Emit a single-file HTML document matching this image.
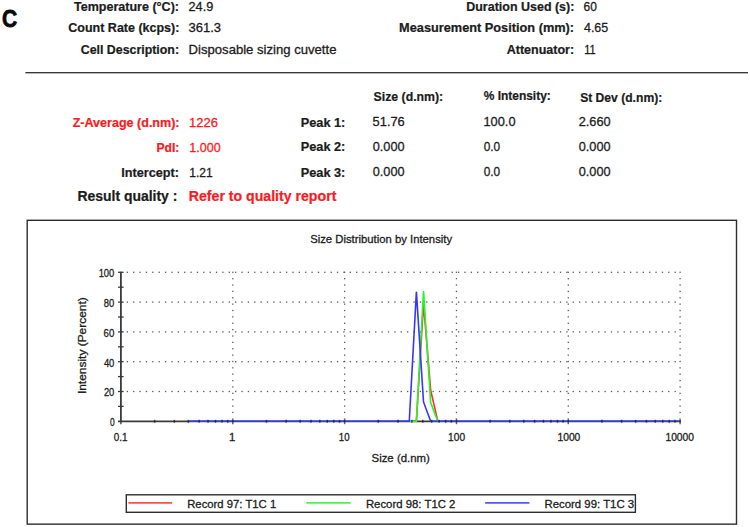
<!DOCTYPE html><html><head><meta charset="utf-8"><style>html,body{margin:0;padding:0;background:#fff}svg{display:block}text{font-family:"Liberation Sans",sans-serif;white-space:pre}</style></head><body>
<svg width="750" height="527" viewBox="0 0 750 527">
<rect width="750" height="527" fill="#fff"/>
<text x="2.11" y="26.70" font-size="24.2" font-weight="bold" textLength="15.15" lengthAdjust="spacingAndGlyphs" fill="#0a0a0a" stroke="#0a0a0a" stroke-width="0.8">C</text>
<text x="73.95" y="11.00" font-size="12.6" font-weight="bold" textLength="105.09" lengthAdjust="spacingAndGlyphs" fill="#1c1c1c" stroke="#1c1c1c" stroke-width="0.22">Temperature (°C):</text>
<text x="68.32" y="32.40" font-size="12.6" font-weight="bold" textLength="111.06" lengthAdjust="spacingAndGlyphs" fill="#1c1c1c" stroke="#1c1c1c" stroke-width="0.22">Count Rate (kcps):</text>
<text x="80.76" y="54.40" font-size="12.6" font-weight="bold" textLength="98.28" lengthAdjust="spacingAndGlyphs" fill="#1c1c1c" stroke="#1c1c1c" stroke-width="0.22">Cell Description:</text>
<text x="188.56" y="11.20" font-size="13" textLength="24.68" lengthAdjust="spacingAndGlyphs" fill="#1c1c1c" stroke="#1c1c1c" stroke-width="0.3">24.9</text>
<text x="188.45" y="32.40" font-size="13" textLength="32.57" lengthAdjust="spacingAndGlyphs" fill="#1c1c1c" stroke="#1c1c1c" stroke-width="0.3">361.3</text>
<text x="188.58" y="54.40" font-size="13" textLength="147.86" lengthAdjust="spacingAndGlyphs" fill="#1c1c1c" stroke="#1c1c1c" stroke-width="0.3">Disposable sizing cuvette</text>
<text x="466.24" y="11.00" font-size="12.6" font-weight="bold" textLength="108.14" lengthAdjust="spacingAndGlyphs" fill="#1c1c1c" stroke="#1c1c1c" stroke-width="0.22">Duration Used (s):</text>
<text x="399.08" y="32.00" font-size="12.6" font-weight="bold" textLength="174.98" lengthAdjust="spacingAndGlyphs" fill="#1c1c1c" stroke="#1c1c1c" stroke-width="0.22">Measurement Position (mm):</text>
<text x="506.73" y="54.40" font-size="12.6" font-weight="bold" textLength="67.38" lengthAdjust="spacingAndGlyphs" fill="#1c1c1c" stroke="#1c1c1c" stroke-width="0.22">Attenuator:</text>
<text x="583.59" y="11.00" font-size="13" textLength="13.33" lengthAdjust="spacingAndGlyphs" fill="#1c1c1c" stroke="#1c1c1c" stroke-width="0.3">60</text>
<text x="584.00" y="32.00" font-size="13" textLength="24.22" lengthAdjust="spacingAndGlyphs" fill="#1c1c1c" stroke="#1c1c1c" stroke-width="0.3">4.65</text>
<text x="584.26" y="54.40" font-size="13" textLength="11.42" lengthAdjust="spacingAndGlyphs" fill="#1c1c1c" stroke="#1c1c1c" stroke-width="0.3">11</text>
<text x="373.53" y="101.40" font-size="12.6" font-weight="bold" textLength="69.69" lengthAdjust="spacingAndGlyphs" fill="#1c1c1c" stroke="#1c1c1c" stroke-width="0.22">Size (d.nm):</text>
<text x="483.69" y="100.40" font-size="12.2" font-weight="bold" textLength="67.11" lengthAdjust="spacingAndGlyphs" fill="#1c1c1c" stroke="#1c1c1c" stroke-width="0.22">% Intensity:</text>
<text x="580.15" y="102.40" font-size="12.6" font-weight="bold" textLength="82.07" lengthAdjust="spacingAndGlyphs" fill="#1c1c1c" stroke="#1c1c1c" stroke-width="0.22">St Dev (d.nm):</text>
<text x="72.69" y="126.80" font-size="12.6" font-weight="bold" textLength="106.86" lengthAdjust="spacingAndGlyphs" fill="#fa1a22" stroke="#fa1a22" stroke-width="0.22">Z-Average (d.nm):</text>
<text x="156.44" y="152.20" font-size="12.6" font-weight="bold" textLength="22.89" lengthAdjust="spacingAndGlyphs" fill="#fa1a22" stroke="#fa1a22" stroke-width="0.22">PdI:</text>
<text x="121.33" y="177.00" font-size="12.6" font-weight="bold" textLength="57.72" lengthAdjust="spacingAndGlyphs" fill="#1c1c1c" stroke="#1c1c1c" stroke-width="0.22">Intercept:</text>
<text x="189.10" y="126.80" font-size="13" textLength="28.78" lengthAdjust="spacingAndGlyphs" fill="#fa1a22" stroke="#fa1a22" stroke-width="0.3">1226</text>
<text x="189.34" y="151.50" font-size="13" textLength="31.27" lengthAdjust="spacingAndGlyphs" fill="#fa1a22" stroke="#fa1a22" stroke-width="0.3">1.000</text>
<text x="189.31" y="176.50" font-size="13" textLength="23.40" lengthAdjust="spacingAndGlyphs" fill="#1c1c1c" stroke="#1c1c1c" stroke-width="0.3">1.21</text>
<text x="300.76" y="127.00" font-size="12.6" font-weight="bold" textLength="44.60" lengthAdjust="spacingAndGlyphs" fill="#1c1c1c" stroke="#1c1c1c" stroke-width="0.22">Peak 1:</text>
<text x="300.76" y="151.10" font-size="12.6" font-weight="bold" textLength="44.60" lengthAdjust="spacingAndGlyphs" fill="#1c1c1c" stroke="#1c1c1c" stroke-width="0.22">Peak 2:</text>
<text x="300.76" y="177.00" font-size="12.6" font-weight="bold" textLength="44.60" lengthAdjust="spacingAndGlyphs" fill="#1c1c1c" stroke="#1c1c1c" stroke-width="0.22">Peak 3:</text>
<text x="372.62" y="126.00" font-size="13" textLength="32.14" lengthAdjust="spacingAndGlyphs" fill="#1c1c1c" stroke="#1c1c1c" stroke-width="0.3">51.76</text>
<text x="372.77" y="151.00" font-size="13" textLength="31.80" lengthAdjust="spacingAndGlyphs" fill="#1c1c1c" stroke="#1c1c1c" stroke-width="0.3">0.000</text>
<text x="372.77" y="176.00" font-size="13" textLength="31.80" lengthAdjust="spacingAndGlyphs" fill="#1c1c1c" stroke="#1c1c1c" stroke-width="0.3">0.000</text>
<text x="483.51" y="126.00" font-size="13" textLength="32.01" lengthAdjust="spacingAndGlyphs" fill="#1c1c1c" stroke="#1c1c1c" stroke-width="0.3">100.0</text>
<text x="483.65" y="151.00" font-size="13" textLength="16.47" lengthAdjust="spacingAndGlyphs" fill="#1c1c1c" stroke="#1c1c1c" stroke-width="0.3">0.0</text>
<text x="483.65" y="176.00" font-size="13" textLength="16.47" lengthAdjust="spacingAndGlyphs" fill="#1c1c1c" stroke="#1c1c1c" stroke-width="0.3">0.0</text>
<text x="578.69" y="126.00" font-size="13" textLength="31.95" lengthAdjust="spacingAndGlyphs" fill="#1c1c1c" stroke="#1c1c1c" stroke-width="0.3">2.660</text>
<text x="578.77" y="151.00" font-size="13" textLength="31.80" lengthAdjust="spacingAndGlyphs" fill="#1c1c1c" stroke="#1c1c1c" stroke-width="0.3">0.000</text>
<text x="578.77" y="176.00" font-size="13" textLength="31.80" lengthAdjust="spacingAndGlyphs" fill="#1c1c1c" stroke="#1c1c1c" stroke-width="0.3">0.000</text>
<text x="77.45" y="200.80" font-size="13.8" font-weight="bold" textLength="99.93" lengthAdjust="spacingAndGlyphs" fill="#1c1c1c" stroke="#1c1c1c" stroke-width="0.22">Result quality :</text>
<text x="188.77" y="201.00" font-size="14.1" font-weight="bold" textLength="147.58" lengthAdjust="spacingAndGlyphs" fill="#fa1a22" stroke="#fa1a22" stroke-width="0.22">Refer to quality report</text>
<text x="310.13" y="243.20" font-size="11.4" textLength="141.98" lengthAdjust="spacingAndGlyphs" fill="#1c1c1c" stroke="#1c1c1c" stroke-width="0.3">Size Distribution by Intensity</text>
<text x="98.63" y="277.20" font-size="11.3" textLength="15.73" lengthAdjust="spacingAndGlyphs" fill="#1c1c1c" stroke="#1c1c1c" stroke-width="0.3">100</text>
<text x="103.76" y="307.00" font-size="11.3" textLength="10.46" lengthAdjust="spacingAndGlyphs" fill="#1c1c1c" stroke="#1c1c1c" stroke-width="0.3">80</text>
<text x="103.58" y="336.80" font-size="11.3" textLength="10.73" lengthAdjust="spacingAndGlyphs" fill="#1c1c1c" stroke="#1c1c1c" stroke-width="0.3">60</text>
<text x="103.89" y="366.60" font-size="11.3" textLength="10.50" lengthAdjust="spacingAndGlyphs" fill="#1c1c1c" stroke="#1c1c1c" stroke-width="0.3">40</text>
<text x="103.95" y="396.40" font-size="11.3" textLength="10.36" lengthAdjust="spacingAndGlyphs" fill="#1c1c1c" stroke="#1c1c1c" stroke-width="0.3">20</text>
<text x="109.96" y="426.20" font-size="11.3" textLength="4.70" lengthAdjust="spacingAndGlyphs" fill="#1c1c1c" stroke="#1c1c1c" stroke-width="0.3">0</text>
<text x="113.67" y="440.60" font-size="11.3" textLength="13.74" lengthAdjust="spacingAndGlyphs" fill="#1c1c1c" stroke="#1c1c1c" stroke-width="0.3">0.1</text>
<text x="228.91" y="440.60" font-size="11.3" fill="#1c1c1c" stroke="#1c1c1c" stroke-width="0.3">1</text>
<text x="338.86" y="440.60" font-size="11.3" textLength="10.76" lengthAdjust="spacingAndGlyphs" fill="#1c1c1c" stroke="#1c1c1c" stroke-width="0.3">10</text>
<text x="448.10" y="440.60" font-size="11.3" textLength="16.94" lengthAdjust="spacingAndGlyphs" fill="#1c1c1c" stroke="#1c1c1c" stroke-width="0.3">100</text>
<text x="557.44" y="440.60" font-size="11.3" textLength="22.91" lengthAdjust="spacingAndGlyphs" fill="#1c1c1c" stroke="#1c1c1c" stroke-width="0.3">1000</text>
<text x="665.44" y="440.60" font-size="11.3" textLength="28.58" lengthAdjust="spacingAndGlyphs" fill="#1c1c1c" stroke="#1c1c1c" stroke-width="0.3">10000</text>
<text x="371.53" y="461.60" font-size="11.4" textLength="58.34" lengthAdjust="spacingAndGlyphs" fill="#1c1c1c" stroke="#1c1c1c" stroke-width="0.3">Size (d.nm)</text>
<text x="187.19" y="507.70" font-size="11.4" textLength="89.01" lengthAdjust="spacingAndGlyphs" fill="#1c1c1c" stroke="#1c1c1c" stroke-width="0.3" clip-path="url(#lc)">Record 97: T1C 1</text>
<text x="365.92" y="507.70" font-size="11.4" textLength="89.52" lengthAdjust="spacingAndGlyphs" fill="#1c1c1c" stroke="#1c1c1c" stroke-width="0.3" clip-path="url(#lc)">Record 98: T1C 2</text>
<text x="544.51" y="507.70" font-size="11.4" textLength="89.65" lengthAdjust="spacingAndGlyphs" fill="#1c1c1c" stroke="#1c1c1c" stroke-width="0.3" clip-path="url(#lc)">Record 99: T1C 3</text>
<text transform="translate(86.1,393.3) rotate(-90)" x="-0.80" y="0" font-size="11.5" textLength="96.84" lengthAdjust="spacingAndGlyphs" fill="#1c1c1c" stroke="#1c1c1c" stroke-width="0.3">Intensity (Percent)</text>
<rect x="25.4" y="72.05" width="722.6" height="1.3" fill="#2e2e2e"/>
<rect x="27.2" y="220.3" width="709.3" height="303.85" fill="none" stroke="#2e2e2e" stroke-width="1.4"/>
<g fill="#5a5a5a"><rect x="126.72" y="390.85" width="1.3" height="1.3"/><rect x="133.09" y="390.85" width="1.3" height="1.3"/><rect x="139.46" y="390.85" width="1.3" height="1.3"/><rect x="145.83" y="390.85" width="1.3" height="1.3"/><rect x="152.20" y="390.85" width="1.3" height="1.3"/><rect x="158.57" y="390.85" width="1.3" height="1.3"/><rect x="164.94" y="390.85" width="1.3" height="1.3"/><rect x="171.31" y="390.85" width="1.3" height="1.3"/><rect x="177.68" y="390.85" width="1.3" height="1.3"/><rect x="184.05" y="390.85" width="1.3" height="1.3"/><rect x="190.42" y="390.85" width="1.3" height="1.3"/><rect x="196.79" y="390.85" width="1.3" height="1.3"/><rect x="203.16" y="390.85" width="1.3" height="1.3"/><rect x="209.53" y="390.85" width="1.3" height="1.3"/><rect x="215.90" y="390.85" width="1.3" height="1.3"/><rect x="222.27" y="390.85" width="1.3" height="1.3"/><rect x="228.64" y="390.85" width="1.3" height="1.3"/><rect x="235.01" y="390.85" width="1.3" height="1.3"/><rect x="241.38" y="390.85" width="1.3" height="1.3"/><rect x="247.75" y="390.85" width="1.3" height="1.3"/><rect x="254.12" y="390.85" width="1.3" height="1.3"/><rect x="260.49" y="390.85" width="1.3" height="1.3"/><rect x="266.86" y="390.85" width="1.3" height="1.3"/><rect x="273.23" y="390.85" width="1.3" height="1.3"/><rect x="279.60" y="390.85" width="1.3" height="1.3"/><rect x="285.97" y="390.85" width="1.3" height="1.3"/><rect x="292.34" y="390.85" width="1.3" height="1.3"/><rect x="298.71" y="390.85" width="1.3" height="1.3"/><rect x="305.08" y="390.85" width="1.3" height="1.3"/><rect x="311.45" y="390.85" width="1.3" height="1.3"/><rect x="317.82" y="390.85" width="1.3" height="1.3"/><rect x="324.19" y="390.85" width="1.3" height="1.3"/><rect x="330.56" y="390.85" width="1.3" height="1.3"/><rect x="336.93" y="390.85" width="1.3" height="1.3"/><rect x="343.30" y="390.85" width="1.3" height="1.3"/><rect x="349.67" y="390.85" width="1.3" height="1.3"/><rect x="356.04" y="390.85" width="1.3" height="1.3"/><rect x="362.41" y="390.85" width="1.3" height="1.3"/><rect x="368.78" y="390.85" width="1.3" height="1.3"/><rect x="375.15" y="390.85" width="1.3" height="1.3"/><rect x="381.52" y="390.85" width="1.3" height="1.3"/><rect x="387.89" y="390.85" width="1.3" height="1.3"/><rect x="394.26" y="390.85" width="1.3" height="1.3"/><rect x="400.63" y="390.85" width="1.3" height="1.3"/><rect x="407.00" y="390.85" width="1.3" height="1.3"/><rect x="413.37" y="390.85" width="1.3" height="1.3"/><rect x="419.74" y="390.85" width="1.3" height="1.3"/><rect x="426.11" y="390.85" width="1.3" height="1.3"/><rect x="432.48" y="390.85" width="1.3" height="1.3"/><rect x="438.85" y="390.85" width="1.3" height="1.3"/><rect x="445.22" y="390.85" width="1.3" height="1.3"/><rect x="451.59" y="390.85" width="1.3" height="1.3"/><rect x="457.96" y="390.85" width="1.3" height="1.3"/><rect x="464.33" y="390.85" width="1.3" height="1.3"/><rect x="470.70" y="390.85" width="1.3" height="1.3"/><rect x="477.07" y="390.85" width="1.3" height="1.3"/><rect x="483.44" y="390.85" width="1.3" height="1.3"/><rect x="489.81" y="390.85" width="1.3" height="1.3"/><rect x="496.18" y="390.85" width="1.3" height="1.3"/><rect x="502.55" y="390.85" width="1.3" height="1.3"/><rect x="508.92" y="390.85" width="1.3" height="1.3"/><rect x="515.29" y="390.85" width="1.3" height="1.3"/><rect x="521.66" y="390.85" width="1.3" height="1.3"/><rect x="528.03" y="390.85" width="1.3" height="1.3"/><rect x="534.40" y="390.85" width="1.3" height="1.3"/><rect x="540.77" y="390.85" width="1.3" height="1.3"/><rect x="547.14" y="390.85" width="1.3" height="1.3"/><rect x="553.51" y="390.85" width="1.3" height="1.3"/><rect x="559.88" y="390.85" width="1.3" height="1.3"/><rect x="566.25" y="390.85" width="1.3" height="1.3"/><rect x="572.62" y="390.85" width="1.3" height="1.3"/><rect x="578.99" y="390.85" width="1.3" height="1.3"/><rect x="585.36" y="390.85" width="1.3" height="1.3"/><rect x="591.73" y="390.85" width="1.3" height="1.3"/><rect x="598.10" y="390.85" width="1.3" height="1.3"/><rect x="604.47" y="390.85" width="1.3" height="1.3"/><rect x="610.84" y="390.85" width="1.3" height="1.3"/><rect x="617.21" y="390.85" width="1.3" height="1.3"/><rect x="623.58" y="390.85" width="1.3" height="1.3"/><rect x="629.95" y="390.85" width="1.3" height="1.3"/><rect x="636.32" y="390.85" width="1.3" height="1.3"/><rect x="642.69" y="390.85" width="1.3" height="1.3"/><rect x="649.06" y="390.85" width="1.3" height="1.3"/><rect x="655.43" y="390.85" width="1.3" height="1.3"/><rect x="661.80" y="390.85" width="1.3" height="1.3"/><rect x="668.17" y="390.85" width="1.3" height="1.3"/><rect x="674.54" y="390.85" width="1.3" height="1.3"/><rect x="126.72" y="361.05" width="1.3" height="1.3"/><rect x="133.09" y="361.05" width="1.3" height="1.3"/><rect x="139.46" y="361.05" width="1.3" height="1.3"/><rect x="145.83" y="361.05" width="1.3" height="1.3"/><rect x="152.20" y="361.05" width="1.3" height="1.3"/><rect x="158.57" y="361.05" width="1.3" height="1.3"/><rect x="164.94" y="361.05" width="1.3" height="1.3"/><rect x="171.31" y="361.05" width="1.3" height="1.3"/><rect x="177.68" y="361.05" width="1.3" height="1.3"/><rect x="184.05" y="361.05" width="1.3" height="1.3"/><rect x="190.42" y="361.05" width="1.3" height="1.3"/><rect x="196.79" y="361.05" width="1.3" height="1.3"/><rect x="203.16" y="361.05" width="1.3" height="1.3"/><rect x="209.53" y="361.05" width="1.3" height="1.3"/><rect x="215.90" y="361.05" width="1.3" height="1.3"/><rect x="222.27" y="361.05" width="1.3" height="1.3"/><rect x="228.64" y="361.05" width="1.3" height="1.3"/><rect x="235.01" y="361.05" width="1.3" height="1.3"/><rect x="241.38" y="361.05" width="1.3" height="1.3"/><rect x="247.75" y="361.05" width="1.3" height="1.3"/><rect x="254.12" y="361.05" width="1.3" height="1.3"/><rect x="260.49" y="361.05" width="1.3" height="1.3"/><rect x="266.86" y="361.05" width="1.3" height="1.3"/><rect x="273.23" y="361.05" width="1.3" height="1.3"/><rect x="279.60" y="361.05" width="1.3" height="1.3"/><rect x="285.97" y="361.05" width="1.3" height="1.3"/><rect x="292.34" y="361.05" width="1.3" height="1.3"/><rect x="298.71" y="361.05" width="1.3" height="1.3"/><rect x="305.08" y="361.05" width="1.3" height="1.3"/><rect x="311.45" y="361.05" width="1.3" height="1.3"/><rect x="317.82" y="361.05" width="1.3" height="1.3"/><rect x="324.19" y="361.05" width="1.3" height="1.3"/><rect x="330.56" y="361.05" width="1.3" height="1.3"/><rect x="336.93" y="361.05" width="1.3" height="1.3"/><rect x="343.30" y="361.05" width="1.3" height="1.3"/><rect x="349.67" y="361.05" width="1.3" height="1.3"/><rect x="356.04" y="361.05" width="1.3" height="1.3"/><rect x="362.41" y="361.05" width="1.3" height="1.3"/><rect x="368.78" y="361.05" width="1.3" height="1.3"/><rect x="375.15" y="361.05" width="1.3" height="1.3"/><rect x="381.52" y="361.05" width="1.3" height="1.3"/><rect x="387.89" y="361.05" width="1.3" height="1.3"/><rect x="394.26" y="361.05" width="1.3" height="1.3"/><rect x="400.63" y="361.05" width="1.3" height="1.3"/><rect x="407.00" y="361.05" width="1.3" height="1.3"/><rect x="413.37" y="361.05" width="1.3" height="1.3"/><rect x="419.74" y="361.05" width="1.3" height="1.3"/><rect x="426.11" y="361.05" width="1.3" height="1.3"/><rect x="432.48" y="361.05" width="1.3" height="1.3"/><rect x="438.85" y="361.05" width="1.3" height="1.3"/><rect x="445.22" y="361.05" width="1.3" height="1.3"/><rect x="451.59" y="361.05" width="1.3" height="1.3"/><rect x="457.96" y="361.05" width="1.3" height="1.3"/><rect x="464.33" y="361.05" width="1.3" height="1.3"/><rect x="470.70" y="361.05" width="1.3" height="1.3"/><rect x="477.07" y="361.05" width="1.3" height="1.3"/><rect x="483.44" y="361.05" width="1.3" height="1.3"/><rect x="489.81" y="361.05" width="1.3" height="1.3"/><rect x="496.18" y="361.05" width="1.3" height="1.3"/><rect x="502.55" y="361.05" width="1.3" height="1.3"/><rect x="508.92" y="361.05" width="1.3" height="1.3"/><rect x="515.29" y="361.05" width="1.3" height="1.3"/><rect x="521.66" y="361.05" width="1.3" height="1.3"/><rect x="528.03" y="361.05" width="1.3" height="1.3"/><rect x="534.40" y="361.05" width="1.3" height="1.3"/><rect x="540.77" y="361.05" width="1.3" height="1.3"/><rect x="547.14" y="361.05" width="1.3" height="1.3"/><rect x="553.51" y="361.05" width="1.3" height="1.3"/><rect x="559.88" y="361.05" width="1.3" height="1.3"/><rect x="566.25" y="361.05" width="1.3" height="1.3"/><rect x="572.62" y="361.05" width="1.3" height="1.3"/><rect x="578.99" y="361.05" width="1.3" height="1.3"/><rect x="585.36" y="361.05" width="1.3" height="1.3"/><rect x="591.73" y="361.05" width="1.3" height="1.3"/><rect x="598.10" y="361.05" width="1.3" height="1.3"/><rect x="604.47" y="361.05" width="1.3" height="1.3"/><rect x="610.84" y="361.05" width="1.3" height="1.3"/><rect x="617.21" y="361.05" width="1.3" height="1.3"/><rect x="623.58" y="361.05" width="1.3" height="1.3"/><rect x="629.95" y="361.05" width="1.3" height="1.3"/><rect x="636.32" y="361.05" width="1.3" height="1.3"/><rect x="642.69" y="361.05" width="1.3" height="1.3"/><rect x="649.06" y="361.05" width="1.3" height="1.3"/><rect x="655.43" y="361.05" width="1.3" height="1.3"/><rect x="661.80" y="361.05" width="1.3" height="1.3"/><rect x="668.17" y="361.05" width="1.3" height="1.3"/><rect x="674.54" y="361.05" width="1.3" height="1.3"/><rect x="126.72" y="331.25" width="1.3" height="1.3"/><rect x="133.09" y="331.25" width="1.3" height="1.3"/><rect x="139.46" y="331.25" width="1.3" height="1.3"/><rect x="145.83" y="331.25" width="1.3" height="1.3"/><rect x="152.20" y="331.25" width="1.3" height="1.3"/><rect x="158.57" y="331.25" width="1.3" height="1.3"/><rect x="164.94" y="331.25" width="1.3" height="1.3"/><rect x="171.31" y="331.25" width="1.3" height="1.3"/><rect x="177.68" y="331.25" width="1.3" height="1.3"/><rect x="184.05" y="331.25" width="1.3" height="1.3"/><rect x="190.42" y="331.25" width="1.3" height="1.3"/><rect x="196.79" y="331.25" width="1.3" height="1.3"/><rect x="203.16" y="331.25" width="1.3" height="1.3"/><rect x="209.53" y="331.25" width="1.3" height="1.3"/><rect x="215.90" y="331.25" width="1.3" height="1.3"/><rect x="222.27" y="331.25" width="1.3" height="1.3"/><rect x="228.64" y="331.25" width="1.3" height="1.3"/><rect x="235.01" y="331.25" width="1.3" height="1.3"/><rect x="241.38" y="331.25" width="1.3" height="1.3"/><rect x="247.75" y="331.25" width="1.3" height="1.3"/><rect x="254.12" y="331.25" width="1.3" height="1.3"/><rect x="260.49" y="331.25" width="1.3" height="1.3"/><rect x="266.86" y="331.25" width="1.3" height="1.3"/><rect x="273.23" y="331.25" width="1.3" height="1.3"/><rect x="279.60" y="331.25" width="1.3" height="1.3"/><rect x="285.97" y="331.25" width="1.3" height="1.3"/><rect x="292.34" y="331.25" width="1.3" height="1.3"/><rect x="298.71" y="331.25" width="1.3" height="1.3"/><rect x="305.08" y="331.25" width="1.3" height="1.3"/><rect x="311.45" y="331.25" width="1.3" height="1.3"/><rect x="317.82" y="331.25" width="1.3" height="1.3"/><rect x="324.19" y="331.25" width="1.3" height="1.3"/><rect x="330.56" y="331.25" width="1.3" height="1.3"/><rect x="336.93" y="331.25" width="1.3" height="1.3"/><rect x="343.30" y="331.25" width="1.3" height="1.3"/><rect x="349.67" y="331.25" width="1.3" height="1.3"/><rect x="356.04" y="331.25" width="1.3" height="1.3"/><rect x="362.41" y="331.25" width="1.3" height="1.3"/><rect x="368.78" y="331.25" width="1.3" height="1.3"/><rect x="375.15" y="331.25" width="1.3" height="1.3"/><rect x="381.52" y="331.25" width="1.3" height="1.3"/><rect x="387.89" y="331.25" width="1.3" height="1.3"/><rect x="394.26" y="331.25" width="1.3" height="1.3"/><rect x="400.63" y="331.25" width="1.3" height="1.3"/><rect x="407.00" y="331.25" width="1.3" height="1.3"/><rect x="413.37" y="331.25" width="1.3" height="1.3"/><rect x="419.74" y="331.25" width="1.3" height="1.3"/><rect x="426.11" y="331.25" width="1.3" height="1.3"/><rect x="432.48" y="331.25" width="1.3" height="1.3"/><rect x="438.85" y="331.25" width="1.3" height="1.3"/><rect x="445.22" y="331.25" width="1.3" height="1.3"/><rect x="451.59" y="331.25" width="1.3" height="1.3"/><rect x="457.96" y="331.25" width="1.3" height="1.3"/><rect x="464.33" y="331.25" width="1.3" height="1.3"/><rect x="470.70" y="331.25" width="1.3" height="1.3"/><rect x="477.07" y="331.25" width="1.3" height="1.3"/><rect x="483.44" y="331.25" width="1.3" height="1.3"/><rect x="489.81" y="331.25" width="1.3" height="1.3"/><rect x="496.18" y="331.25" width="1.3" height="1.3"/><rect x="502.55" y="331.25" width="1.3" height="1.3"/><rect x="508.92" y="331.25" width="1.3" height="1.3"/><rect x="515.29" y="331.25" width="1.3" height="1.3"/><rect x="521.66" y="331.25" width="1.3" height="1.3"/><rect x="528.03" y="331.25" width="1.3" height="1.3"/><rect x="534.40" y="331.25" width="1.3" height="1.3"/><rect x="540.77" y="331.25" width="1.3" height="1.3"/><rect x="547.14" y="331.25" width="1.3" height="1.3"/><rect x="553.51" y="331.25" width="1.3" height="1.3"/><rect x="559.88" y="331.25" width="1.3" height="1.3"/><rect x="566.25" y="331.25" width="1.3" height="1.3"/><rect x="572.62" y="331.25" width="1.3" height="1.3"/><rect x="578.99" y="331.25" width="1.3" height="1.3"/><rect x="585.36" y="331.25" width="1.3" height="1.3"/><rect x="591.73" y="331.25" width="1.3" height="1.3"/><rect x="598.10" y="331.25" width="1.3" height="1.3"/><rect x="604.47" y="331.25" width="1.3" height="1.3"/><rect x="610.84" y="331.25" width="1.3" height="1.3"/><rect x="617.21" y="331.25" width="1.3" height="1.3"/><rect x="623.58" y="331.25" width="1.3" height="1.3"/><rect x="629.95" y="331.25" width="1.3" height="1.3"/><rect x="636.32" y="331.25" width="1.3" height="1.3"/><rect x="642.69" y="331.25" width="1.3" height="1.3"/><rect x="649.06" y="331.25" width="1.3" height="1.3"/><rect x="655.43" y="331.25" width="1.3" height="1.3"/><rect x="661.80" y="331.25" width="1.3" height="1.3"/><rect x="668.17" y="331.25" width="1.3" height="1.3"/><rect x="674.54" y="331.25" width="1.3" height="1.3"/><rect x="126.72" y="301.45" width="1.3" height="1.3"/><rect x="133.09" y="301.45" width="1.3" height="1.3"/><rect x="139.46" y="301.45" width="1.3" height="1.3"/><rect x="145.83" y="301.45" width="1.3" height="1.3"/><rect x="152.20" y="301.45" width="1.3" height="1.3"/><rect x="158.57" y="301.45" width="1.3" height="1.3"/><rect x="164.94" y="301.45" width="1.3" height="1.3"/><rect x="171.31" y="301.45" width="1.3" height="1.3"/><rect x="177.68" y="301.45" width="1.3" height="1.3"/><rect x="184.05" y="301.45" width="1.3" height="1.3"/><rect x="190.42" y="301.45" width="1.3" height="1.3"/><rect x="196.79" y="301.45" width="1.3" height="1.3"/><rect x="203.16" y="301.45" width="1.3" height="1.3"/><rect x="209.53" y="301.45" width="1.3" height="1.3"/><rect x="215.90" y="301.45" width="1.3" height="1.3"/><rect x="222.27" y="301.45" width="1.3" height="1.3"/><rect x="228.64" y="301.45" width="1.3" height="1.3"/><rect x="235.01" y="301.45" width="1.3" height="1.3"/><rect x="241.38" y="301.45" width="1.3" height="1.3"/><rect x="247.75" y="301.45" width="1.3" height="1.3"/><rect x="254.12" y="301.45" width="1.3" height="1.3"/><rect x="260.49" y="301.45" width="1.3" height="1.3"/><rect x="266.86" y="301.45" width="1.3" height="1.3"/><rect x="273.23" y="301.45" width="1.3" height="1.3"/><rect x="279.60" y="301.45" width="1.3" height="1.3"/><rect x="285.97" y="301.45" width="1.3" height="1.3"/><rect x="292.34" y="301.45" width="1.3" height="1.3"/><rect x="298.71" y="301.45" width="1.3" height="1.3"/><rect x="305.08" y="301.45" width="1.3" height="1.3"/><rect x="311.45" y="301.45" width="1.3" height="1.3"/><rect x="317.82" y="301.45" width="1.3" height="1.3"/><rect x="324.19" y="301.45" width="1.3" height="1.3"/><rect x="330.56" y="301.45" width="1.3" height="1.3"/><rect x="336.93" y="301.45" width="1.3" height="1.3"/><rect x="343.30" y="301.45" width="1.3" height="1.3"/><rect x="349.67" y="301.45" width="1.3" height="1.3"/><rect x="356.04" y="301.45" width="1.3" height="1.3"/><rect x="362.41" y="301.45" width="1.3" height="1.3"/><rect x="368.78" y="301.45" width="1.3" height="1.3"/><rect x="375.15" y="301.45" width="1.3" height="1.3"/><rect x="381.52" y="301.45" width="1.3" height="1.3"/><rect x="387.89" y="301.45" width="1.3" height="1.3"/><rect x="394.26" y="301.45" width="1.3" height="1.3"/><rect x="400.63" y="301.45" width="1.3" height="1.3"/><rect x="407.00" y="301.45" width="1.3" height="1.3"/><rect x="413.37" y="301.45" width="1.3" height="1.3"/><rect x="419.74" y="301.45" width="1.3" height="1.3"/><rect x="426.11" y="301.45" width="1.3" height="1.3"/><rect x="432.48" y="301.45" width="1.3" height="1.3"/><rect x="438.85" y="301.45" width="1.3" height="1.3"/><rect x="445.22" y="301.45" width="1.3" height="1.3"/><rect x="451.59" y="301.45" width="1.3" height="1.3"/><rect x="457.96" y="301.45" width="1.3" height="1.3"/><rect x="464.33" y="301.45" width="1.3" height="1.3"/><rect x="470.70" y="301.45" width="1.3" height="1.3"/><rect x="477.07" y="301.45" width="1.3" height="1.3"/><rect x="483.44" y="301.45" width="1.3" height="1.3"/><rect x="489.81" y="301.45" width="1.3" height="1.3"/><rect x="496.18" y="301.45" width="1.3" height="1.3"/><rect x="502.55" y="301.45" width="1.3" height="1.3"/><rect x="508.92" y="301.45" width="1.3" height="1.3"/><rect x="515.29" y="301.45" width="1.3" height="1.3"/><rect x="521.66" y="301.45" width="1.3" height="1.3"/><rect x="528.03" y="301.45" width="1.3" height="1.3"/><rect x="534.40" y="301.45" width="1.3" height="1.3"/><rect x="540.77" y="301.45" width="1.3" height="1.3"/><rect x="547.14" y="301.45" width="1.3" height="1.3"/><rect x="553.51" y="301.45" width="1.3" height="1.3"/><rect x="559.88" y="301.45" width="1.3" height="1.3"/><rect x="566.25" y="301.45" width="1.3" height="1.3"/><rect x="572.62" y="301.45" width="1.3" height="1.3"/><rect x="578.99" y="301.45" width="1.3" height="1.3"/><rect x="585.36" y="301.45" width="1.3" height="1.3"/><rect x="591.73" y="301.45" width="1.3" height="1.3"/><rect x="598.10" y="301.45" width="1.3" height="1.3"/><rect x="604.47" y="301.45" width="1.3" height="1.3"/><rect x="610.84" y="301.45" width="1.3" height="1.3"/><rect x="617.21" y="301.45" width="1.3" height="1.3"/><rect x="623.58" y="301.45" width="1.3" height="1.3"/><rect x="629.95" y="301.45" width="1.3" height="1.3"/><rect x="636.32" y="301.45" width="1.3" height="1.3"/><rect x="642.69" y="301.45" width="1.3" height="1.3"/><rect x="649.06" y="301.45" width="1.3" height="1.3"/><rect x="655.43" y="301.45" width="1.3" height="1.3"/><rect x="661.80" y="301.45" width="1.3" height="1.3"/><rect x="668.17" y="301.45" width="1.3" height="1.3"/><rect x="674.54" y="301.45" width="1.3" height="1.3"/><rect x="126.72" y="271.65" width="1.3" height="1.3"/><rect x="133.09" y="271.65" width="1.3" height="1.3"/><rect x="139.46" y="271.65" width="1.3" height="1.3"/><rect x="145.83" y="271.65" width="1.3" height="1.3"/><rect x="152.20" y="271.65" width="1.3" height="1.3"/><rect x="158.57" y="271.65" width="1.3" height="1.3"/><rect x="164.94" y="271.65" width="1.3" height="1.3"/><rect x="171.31" y="271.65" width="1.3" height="1.3"/><rect x="177.68" y="271.65" width="1.3" height="1.3"/><rect x="184.05" y="271.65" width="1.3" height="1.3"/><rect x="190.42" y="271.65" width="1.3" height="1.3"/><rect x="196.79" y="271.65" width="1.3" height="1.3"/><rect x="203.16" y="271.65" width="1.3" height="1.3"/><rect x="209.53" y="271.65" width="1.3" height="1.3"/><rect x="215.90" y="271.65" width="1.3" height="1.3"/><rect x="222.27" y="271.65" width="1.3" height="1.3"/><rect x="228.64" y="271.65" width="1.3" height="1.3"/><rect x="235.01" y="271.65" width="1.3" height="1.3"/><rect x="241.38" y="271.65" width="1.3" height="1.3"/><rect x="247.75" y="271.65" width="1.3" height="1.3"/><rect x="254.12" y="271.65" width="1.3" height="1.3"/><rect x="260.49" y="271.65" width="1.3" height="1.3"/><rect x="266.86" y="271.65" width="1.3" height="1.3"/><rect x="273.23" y="271.65" width="1.3" height="1.3"/><rect x="279.60" y="271.65" width="1.3" height="1.3"/><rect x="285.97" y="271.65" width="1.3" height="1.3"/><rect x="292.34" y="271.65" width="1.3" height="1.3"/><rect x="298.71" y="271.65" width="1.3" height="1.3"/><rect x="305.08" y="271.65" width="1.3" height="1.3"/><rect x="311.45" y="271.65" width="1.3" height="1.3"/><rect x="317.82" y="271.65" width="1.3" height="1.3"/><rect x="324.19" y="271.65" width="1.3" height="1.3"/><rect x="330.56" y="271.65" width="1.3" height="1.3"/><rect x="336.93" y="271.65" width="1.3" height="1.3"/><rect x="343.30" y="271.65" width="1.3" height="1.3"/><rect x="349.67" y="271.65" width="1.3" height="1.3"/><rect x="356.04" y="271.65" width="1.3" height="1.3"/><rect x="362.41" y="271.65" width="1.3" height="1.3"/><rect x="368.78" y="271.65" width="1.3" height="1.3"/><rect x="375.15" y="271.65" width="1.3" height="1.3"/><rect x="381.52" y="271.65" width="1.3" height="1.3"/><rect x="387.89" y="271.65" width="1.3" height="1.3"/><rect x="394.26" y="271.65" width="1.3" height="1.3"/><rect x="400.63" y="271.65" width="1.3" height="1.3"/><rect x="407.00" y="271.65" width="1.3" height="1.3"/><rect x="413.37" y="271.65" width="1.3" height="1.3"/><rect x="419.74" y="271.65" width="1.3" height="1.3"/><rect x="426.11" y="271.65" width="1.3" height="1.3"/><rect x="432.48" y="271.65" width="1.3" height="1.3"/><rect x="438.85" y="271.65" width="1.3" height="1.3"/><rect x="445.22" y="271.65" width="1.3" height="1.3"/><rect x="451.59" y="271.65" width="1.3" height="1.3"/><rect x="457.96" y="271.65" width="1.3" height="1.3"/><rect x="464.33" y="271.65" width="1.3" height="1.3"/><rect x="470.70" y="271.65" width="1.3" height="1.3"/><rect x="477.07" y="271.65" width="1.3" height="1.3"/><rect x="483.44" y="271.65" width="1.3" height="1.3"/><rect x="489.81" y="271.65" width="1.3" height="1.3"/><rect x="496.18" y="271.65" width="1.3" height="1.3"/><rect x="502.55" y="271.65" width="1.3" height="1.3"/><rect x="508.92" y="271.65" width="1.3" height="1.3"/><rect x="515.29" y="271.65" width="1.3" height="1.3"/><rect x="521.66" y="271.65" width="1.3" height="1.3"/><rect x="528.03" y="271.65" width="1.3" height="1.3"/><rect x="534.40" y="271.65" width="1.3" height="1.3"/><rect x="540.77" y="271.65" width="1.3" height="1.3"/><rect x="547.14" y="271.65" width="1.3" height="1.3"/><rect x="553.51" y="271.65" width="1.3" height="1.3"/><rect x="559.88" y="271.65" width="1.3" height="1.3"/><rect x="566.25" y="271.65" width="1.3" height="1.3"/><rect x="572.62" y="271.65" width="1.3" height="1.3"/><rect x="578.99" y="271.65" width="1.3" height="1.3"/><rect x="585.36" y="271.65" width="1.3" height="1.3"/><rect x="591.73" y="271.65" width="1.3" height="1.3"/><rect x="598.10" y="271.65" width="1.3" height="1.3"/><rect x="604.47" y="271.65" width="1.3" height="1.3"/><rect x="610.84" y="271.65" width="1.3" height="1.3"/><rect x="617.21" y="271.65" width="1.3" height="1.3"/><rect x="623.58" y="271.65" width="1.3" height="1.3"/><rect x="629.95" y="271.65" width="1.3" height="1.3"/><rect x="636.32" y="271.65" width="1.3" height="1.3"/><rect x="642.69" y="271.65" width="1.3" height="1.3"/><rect x="649.06" y="271.65" width="1.3" height="1.3"/><rect x="655.43" y="271.65" width="1.3" height="1.3"/><rect x="661.80" y="271.65" width="1.3" height="1.3"/><rect x="668.17" y="271.65" width="1.3" height="1.3"/><rect x="674.54" y="271.65" width="1.3" height="1.3"/><rect x="232.17" y="271.65" width="1.3" height="1.3"/><rect x="232.17" y="278.02" width="1.3" height="1.3"/><rect x="232.17" y="284.39" width="1.3" height="1.3"/><rect x="232.17" y="290.76" width="1.3" height="1.3"/><rect x="232.17" y="297.13" width="1.3" height="1.3"/><rect x="232.17" y="303.50" width="1.3" height="1.3"/><rect x="232.17" y="309.87" width="1.3" height="1.3"/><rect x="232.17" y="316.24" width="1.3" height="1.3"/><rect x="232.17" y="322.61" width="1.3" height="1.3"/><rect x="232.17" y="328.98" width="1.3" height="1.3"/><rect x="232.17" y="335.35" width="1.3" height="1.3"/><rect x="232.17" y="341.72" width="1.3" height="1.3"/><rect x="232.17" y="348.09" width="1.3" height="1.3"/><rect x="232.17" y="354.46" width="1.3" height="1.3"/><rect x="232.17" y="360.83" width="1.3" height="1.3"/><rect x="232.17" y="367.20" width="1.3" height="1.3"/><rect x="232.17" y="373.57" width="1.3" height="1.3"/><rect x="232.17" y="379.94" width="1.3" height="1.3"/><rect x="232.17" y="386.31" width="1.3" height="1.3"/><rect x="232.17" y="392.68" width="1.3" height="1.3"/><rect x="232.17" y="399.05" width="1.3" height="1.3"/><rect x="232.17" y="405.42" width="1.3" height="1.3"/><rect x="232.17" y="411.79" width="1.3" height="1.3"/><rect x="343.99" y="271.65" width="1.3" height="1.3"/><rect x="343.99" y="278.02" width="1.3" height="1.3"/><rect x="343.99" y="284.39" width="1.3" height="1.3"/><rect x="343.99" y="290.76" width="1.3" height="1.3"/><rect x="343.99" y="297.13" width="1.3" height="1.3"/><rect x="343.99" y="303.50" width="1.3" height="1.3"/><rect x="343.99" y="309.87" width="1.3" height="1.3"/><rect x="343.99" y="316.24" width="1.3" height="1.3"/><rect x="343.99" y="322.61" width="1.3" height="1.3"/><rect x="343.99" y="328.98" width="1.3" height="1.3"/><rect x="343.99" y="335.35" width="1.3" height="1.3"/><rect x="343.99" y="341.72" width="1.3" height="1.3"/><rect x="343.99" y="348.09" width="1.3" height="1.3"/><rect x="343.99" y="354.46" width="1.3" height="1.3"/><rect x="343.99" y="360.83" width="1.3" height="1.3"/><rect x="343.99" y="367.20" width="1.3" height="1.3"/><rect x="343.99" y="373.57" width="1.3" height="1.3"/><rect x="343.99" y="379.94" width="1.3" height="1.3"/><rect x="343.99" y="386.31" width="1.3" height="1.3"/><rect x="343.99" y="392.68" width="1.3" height="1.3"/><rect x="343.99" y="399.05" width="1.3" height="1.3"/><rect x="343.99" y="405.42" width="1.3" height="1.3"/><rect x="343.99" y="411.79" width="1.3" height="1.3"/><rect x="455.81" y="271.65" width="1.3" height="1.3"/><rect x="455.81" y="278.02" width="1.3" height="1.3"/><rect x="455.81" y="284.39" width="1.3" height="1.3"/><rect x="455.81" y="290.76" width="1.3" height="1.3"/><rect x="455.81" y="297.13" width="1.3" height="1.3"/><rect x="455.81" y="303.50" width="1.3" height="1.3"/><rect x="455.81" y="309.87" width="1.3" height="1.3"/><rect x="455.81" y="316.24" width="1.3" height="1.3"/><rect x="455.81" y="322.61" width="1.3" height="1.3"/><rect x="455.81" y="328.98" width="1.3" height="1.3"/><rect x="455.81" y="335.35" width="1.3" height="1.3"/><rect x="455.81" y="341.72" width="1.3" height="1.3"/><rect x="455.81" y="348.09" width="1.3" height="1.3"/><rect x="455.81" y="354.46" width="1.3" height="1.3"/><rect x="455.81" y="360.83" width="1.3" height="1.3"/><rect x="455.81" y="367.20" width="1.3" height="1.3"/><rect x="455.81" y="373.57" width="1.3" height="1.3"/><rect x="455.81" y="379.94" width="1.3" height="1.3"/><rect x="455.81" y="386.31" width="1.3" height="1.3"/><rect x="455.81" y="392.68" width="1.3" height="1.3"/><rect x="455.81" y="399.05" width="1.3" height="1.3"/><rect x="455.81" y="405.42" width="1.3" height="1.3"/><rect x="455.81" y="411.79" width="1.3" height="1.3"/><rect x="567.63" y="271.65" width="1.3" height="1.3"/><rect x="567.63" y="278.02" width="1.3" height="1.3"/><rect x="567.63" y="284.39" width="1.3" height="1.3"/><rect x="567.63" y="290.76" width="1.3" height="1.3"/><rect x="567.63" y="297.13" width="1.3" height="1.3"/><rect x="567.63" y="303.50" width="1.3" height="1.3"/><rect x="567.63" y="309.87" width="1.3" height="1.3"/><rect x="567.63" y="316.24" width="1.3" height="1.3"/><rect x="567.63" y="322.61" width="1.3" height="1.3"/><rect x="567.63" y="328.98" width="1.3" height="1.3"/><rect x="567.63" y="335.35" width="1.3" height="1.3"/><rect x="567.63" y="341.72" width="1.3" height="1.3"/><rect x="567.63" y="348.09" width="1.3" height="1.3"/><rect x="567.63" y="354.46" width="1.3" height="1.3"/><rect x="567.63" y="360.83" width="1.3" height="1.3"/><rect x="567.63" y="367.20" width="1.3" height="1.3"/><rect x="567.63" y="373.57" width="1.3" height="1.3"/><rect x="567.63" y="379.94" width="1.3" height="1.3"/><rect x="567.63" y="386.31" width="1.3" height="1.3"/><rect x="567.63" y="392.68" width="1.3" height="1.3"/><rect x="567.63" y="399.05" width="1.3" height="1.3"/><rect x="567.63" y="405.42" width="1.3" height="1.3"/><rect x="567.63" y="411.79" width="1.3" height="1.3"/><rect x="679.45" y="271.65" width="1.3" height="1.3"/><rect x="679.45" y="278.02" width="1.3" height="1.3"/><rect x="679.45" y="284.39" width="1.3" height="1.3"/><rect x="679.45" y="290.76" width="1.3" height="1.3"/><rect x="679.45" y="297.13" width="1.3" height="1.3"/><rect x="679.45" y="303.50" width="1.3" height="1.3"/><rect x="679.45" y="309.87" width="1.3" height="1.3"/><rect x="679.45" y="316.24" width="1.3" height="1.3"/><rect x="679.45" y="322.61" width="1.3" height="1.3"/><rect x="679.45" y="328.98" width="1.3" height="1.3"/><rect x="679.45" y="335.35" width="1.3" height="1.3"/><rect x="679.45" y="341.72" width="1.3" height="1.3"/><rect x="679.45" y="348.09" width="1.3" height="1.3"/><rect x="679.45" y="354.46" width="1.3" height="1.3"/><rect x="679.45" y="360.83" width="1.3" height="1.3"/><rect x="679.45" y="367.20" width="1.3" height="1.3"/><rect x="679.45" y="373.57" width="1.3" height="1.3"/><rect x="679.45" y="379.94" width="1.3" height="1.3"/><rect x="679.45" y="386.31" width="1.3" height="1.3"/><rect x="679.45" y="392.68" width="1.3" height="1.3"/><rect x="679.45" y="399.05" width="1.3" height="1.3"/><rect x="679.45" y="405.42" width="1.3" height="1.3"/><rect x="679.45" y="411.79" width="1.3" height="1.3"/></g>
<g stroke="#3a3a3a" fill="none">
<line x1="120.9" x2="120.9" y1="271.70" y2="422.15" stroke-width="1.8"/>
<line x1="118.0" x2="680.80" y1="421.3" y2="421.3" stroke-width="1.7"/>
<g stroke-width="1.3"><line x1="118.0" x2="123.6" y1="406.40" y2="406.40"/><line x1="118.0" x2="123.6" y1="391.50" y2="391.50"/><line x1="118.0" x2="123.6" y1="376.60" y2="376.60"/><line x1="118.0" x2="123.6" y1="361.70" y2="361.70"/><line x1="118.0" x2="123.6" y1="346.80" y2="346.80"/><line x1="118.0" x2="123.6" y1="331.90" y2="331.90"/><line x1="118.0" x2="123.6" y1="317.00" y2="317.00"/><line x1="118.0" x2="123.6" y1="302.10" y2="302.10"/><line x1="118.0" x2="123.6" y1="287.20" y2="287.20"/><line x1="118.0" x2="123.6" y1="272.30" y2="272.30"/><line x1="120.90" x2="120.90" y1="421.30" y2="424.20"/></g></g>
<polyline points="188.32,421.30 195.45,421.30 202.58,421.30 209.70,421.30 216.83,421.30 223.96,421.30 231.09,421.30 238.21,421.30 245.34,421.30 252.47,421.30 259.59,421.30 266.72,421.30 273.85,421.30 280.98,421.30 288.10,421.30 295.23,421.30 302.36,421.30 309.48,421.30 316.61,421.30 323.74,421.30 330.87,421.30 337.99,421.30 345.12,421.30 352.25,421.30 359.38,421.30 366.50,421.30 373.63,421.30 380.76,421.30 387.88,421.30 395.01,421.30 402.14,421.30 409.27,421.30 416.39,421.30 423.52,303.59 430.65,390.01 437.77,421.30 444.90,421.30 452.03,421.30 459.16,421.30 466.28,421.30 473.41,421.30 480.54,421.30 487.67,421.30 494.79,421.30 501.92,421.30 509.05,421.30 516.17,421.30 523.30,421.30 530.43,421.30 537.56,421.30 544.68,421.30 551.81,421.30 558.94,421.30 566.06,421.30 573.19,421.30 580.32,421.30 587.45,421.30 594.57,421.30 601.70,421.30 608.83,421.30 615.96,421.30 623.08,421.30 630.21,421.30 637.34,421.30 644.46,421.30 651.59,421.30 658.72,421.30 665.85,421.30 672.97,421.30 680.10,421.30" fill="none" stroke="#ff3030" stroke-width="1.6" stroke-linejoin="miter" stroke-miterlimit="10"/>
<polyline points="188.32,421.30 195.45,421.30 202.58,421.30 209.70,421.30 216.83,421.30 223.96,421.30 231.09,421.30 238.21,421.30 245.34,421.30 252.47,421.30 259.59,421.30 266.72,421.30 273.85,421.30 280.98,421.30 288.10,421.30 295.23,421.30 302.36,421.30 309.48,421.30 316.61,421.30 323.74,421.30 330.87,421.30 337.99,421.30 345.12,421.30 352.25,421.30 359.38,421.30 366.50,421.30 373.63,421.30 380.76,421.30 387.88,421.30 395.01,421.30 402.14,421.30 409.27,421.30 416.39,421.30 423.52,291.07 430.65,402.53 437.77,421.30 444.90,421.30 452.03,421.30 459.16,421.30 466.28,421.30 473.41,421.30 480.54,421.30 487.67,421.30 494.79,421.30 501.92,421.30 509.05,421.30 516.17,421.30 523.30,421.30 530.43,421.30 537.56,421.30 544.68,421.30 551.81,421.30 558.94,421.30 566.06,421.30 573.19,421.30 580.32,421.30 587.45,421.30 594.57,421.30 601.70,421.30 608.83,421.30 615.96,421.30 623.08,421.30 630.21,421.30 637.34,421.30 644.46,421.30 651.59,421.30 658.72,421.30 665.85,421.30 672.97,421.30 680.10,421.30" fill="none" stroke="#28f528" stroke-width="1.6" stroke-linejoin="miter" stroke-miterlimit="10"/>
<polyline points="188.32,421.30 195.45,421.30 202.58,421.30 209.70,421.30 216.83,421.30 223.96,421.30 231.09,421.30 238.21,421.30 245.34,421.30 252.47,421.30 259.59,421.30 266.72,421.30 273.85,421.30 280.98,421.30 288.10,421.30 295.23,421.30 302.36,421.30 309.48,421.30 316.61,421.30 323.74,421.30 330.87,421.30 337.99,421.30 345.12,421.30 352.25,421.30 359.38,421.30 366.50,421.30 373.63,421.30 380.76,421.30 387.88,421.30 395.01,421.30 402.14,421.30 409.27,421.30 416.39,291.67 423.52,401.93 430.65,421.30 437.77,421.30 444.90,421.30 452.03,421.30 459.16,421.30 466.28,421.30 473.41,421.30 480.54,421.30 487.67,421.30 494.79,421.30 501.92,421.30 509.05,421.30 516.17,421.30 523.30,421.30 530.43,421.30 537.56,421.30 544.68,421.30 551.81,421.30 558.94,421.30 566.06,421.30 573.19,421.30 580.32,421.30 587.45,421.30 594.57,421.30 601.70,421.30 608.83,421.30 615.96,421.30 623.08,421.30 630.21,421.30 637.34,421.30 644.46,421.30 651.59,421.30 658.72,421.30 665.85,421.30 672.97,421.30 680.10,421.30" fill="none" stroke="#3535ff" stroke-width="1.6" stroke-linejoin="miter" stroke-miterlimit="10"/>
<g stroke="#10101a" stroke-opacity="0.65" stroke-width="1.5" fill="none"><line x1="154.66" x2="154.66" y1="419.80" y2="422.80"/><line x1="174.35" x2="174.35" y1="419.80" y2="422.80"/><line x1="188.32" x2="188.32" y1="419.80" y2="422.80"/><line x1="199.16" x2="199.16" y1="419.80" y2="422.80"/><line x1="208.01" x2="208.01" y1="419.80" y2="422.80"/><line x1="215.50" x2="215.50" y1="419.80" y2="422.80"/><line x1="221.98" x2="221.98" y1="419.80" y2="422.80"/><line x1="227.70" x2="227.70" y1="419.80" y2="422.80"/><line x1="232.82" x2="232.82" y1="418.40" y2="424.20"/><line x1="266.48" x2="266.48" y1="419.80" y2="422.80"/><line x1="286.17" x2="286.17" y1="419.80" y2="422.80"/><line x1="300.14" x2="300.14" y1="419.80" y2="422.80"/><line x1="310.98" x2="310.98" y1="419.80" y2="422.80"/><line x1="319.83" x2="319.83" y1="419.80" y2="422.80"/><line x1="327.32" x2="327.32" y1="419.80" y2="422.80"/><line x1="333.80" x2="333.80" y1="419.80" y2="422.80"/><line x1="339.52" x2="339.52" y1="419.80" y2="422.80"/><line x1="344.64" x2="344.64" y1="418.40" y2="424.20"/><line x1="378.30" x2="378.30" y1="419.80" y2="422.80"/><line x1="397.99" x2="397.99" y1="419.80" y2="422.80"/><line x1="411.96" x2="411.96" y1="419.80" y2="422.80"/><line x1="422.80" x2="422.80" y1="419.80" y2="422.80"/><line x1="431.65" x2="431.65" y1="419.80" y2="422.80"/><line x1="439.14" x2="439.14" y1="419.80" y2="422.80"/><line x1="445.62" x2="445.62" y1="419.80" y2="422.80"/><line x1="451.34" x2="451.34" y1="419.80" y2="422.80"/><line x1="456.46" x2="456.46" y1="418.40" y2="424.20"/><line x1="490.12" x2="490.12" y1="419.80" y2="422.80"/><line x1="509.81" x2="509.81" y1="419.80" y2="422.80"/><line x1="523.78" x2="523.78" y1="419.80" y2="422.80"/><line x1="534.62" x2="534.62" y1="419.80" y2="422.80"/><line x1="543.47" x2="543.47" y1="419.80" y2="422.80"/><line x1="550.96" x2="550.96" y1="419.80" y2="422.80"/><line x1="557.44" x2="557.44" y1="419.80" y2="422.80"/><line x1="563.16" x2="563.16" y1="419.80" y2="422.80"/><line x1="568.28" x2="568.28" y1="418.40" y2="424.20"/><line x1="601.94" x2="601.94" y1="419.80" y2="422.80"/><line x1="621.63" x2="621.63" y1="419.80" y2="422.80"/><line x1="635.60" x2="635.60" y1="419.80" y2="422.80"/><line x1="646.44" x2="646.44" y1="419.80" y2="422.80"/><line x1="655.29" x2="655.29" y1="419.80" y2="422.80"/><line x1="662.78" x2="662.78" y1="419.80" y2="422.80"/><line x1="669.26" x2="669.26" y1="419.80" y2="422.80"/><line x1="674.98" x2="674.98" y1="419.80" y2="422.80"/><line x1="680.10" x2="680.10" y1="418.40" y2="424.20"/></g>
<rect x="126.3" y="494.8" width="509.1" height="17.5" fill="none" stroke="#2e2e2e" stroke-width="1.4"/>
<clipPath id="lc"><rect x="126" y="494" width="508.8" height="19"/></clipPath>
<line x1="128.4" x2="172.2" y1="502.95" y2="502.95" stroke="#ff3030" stroke-width="1.7" stroke-opacity="0.85"/>
<line x1="306.3" x2="350.6" y1="502.95" y2="502.95" stroke="#28f528" stroke-width="1.7" stroke-opacity="0.85"/>
<line x1="485.2" x2="529.4" y1="502.95" y2="502.95" stroke="#3535ff" stroke-width="1.7" stroke-opacity="0.85"/>
</svg></body></html>
